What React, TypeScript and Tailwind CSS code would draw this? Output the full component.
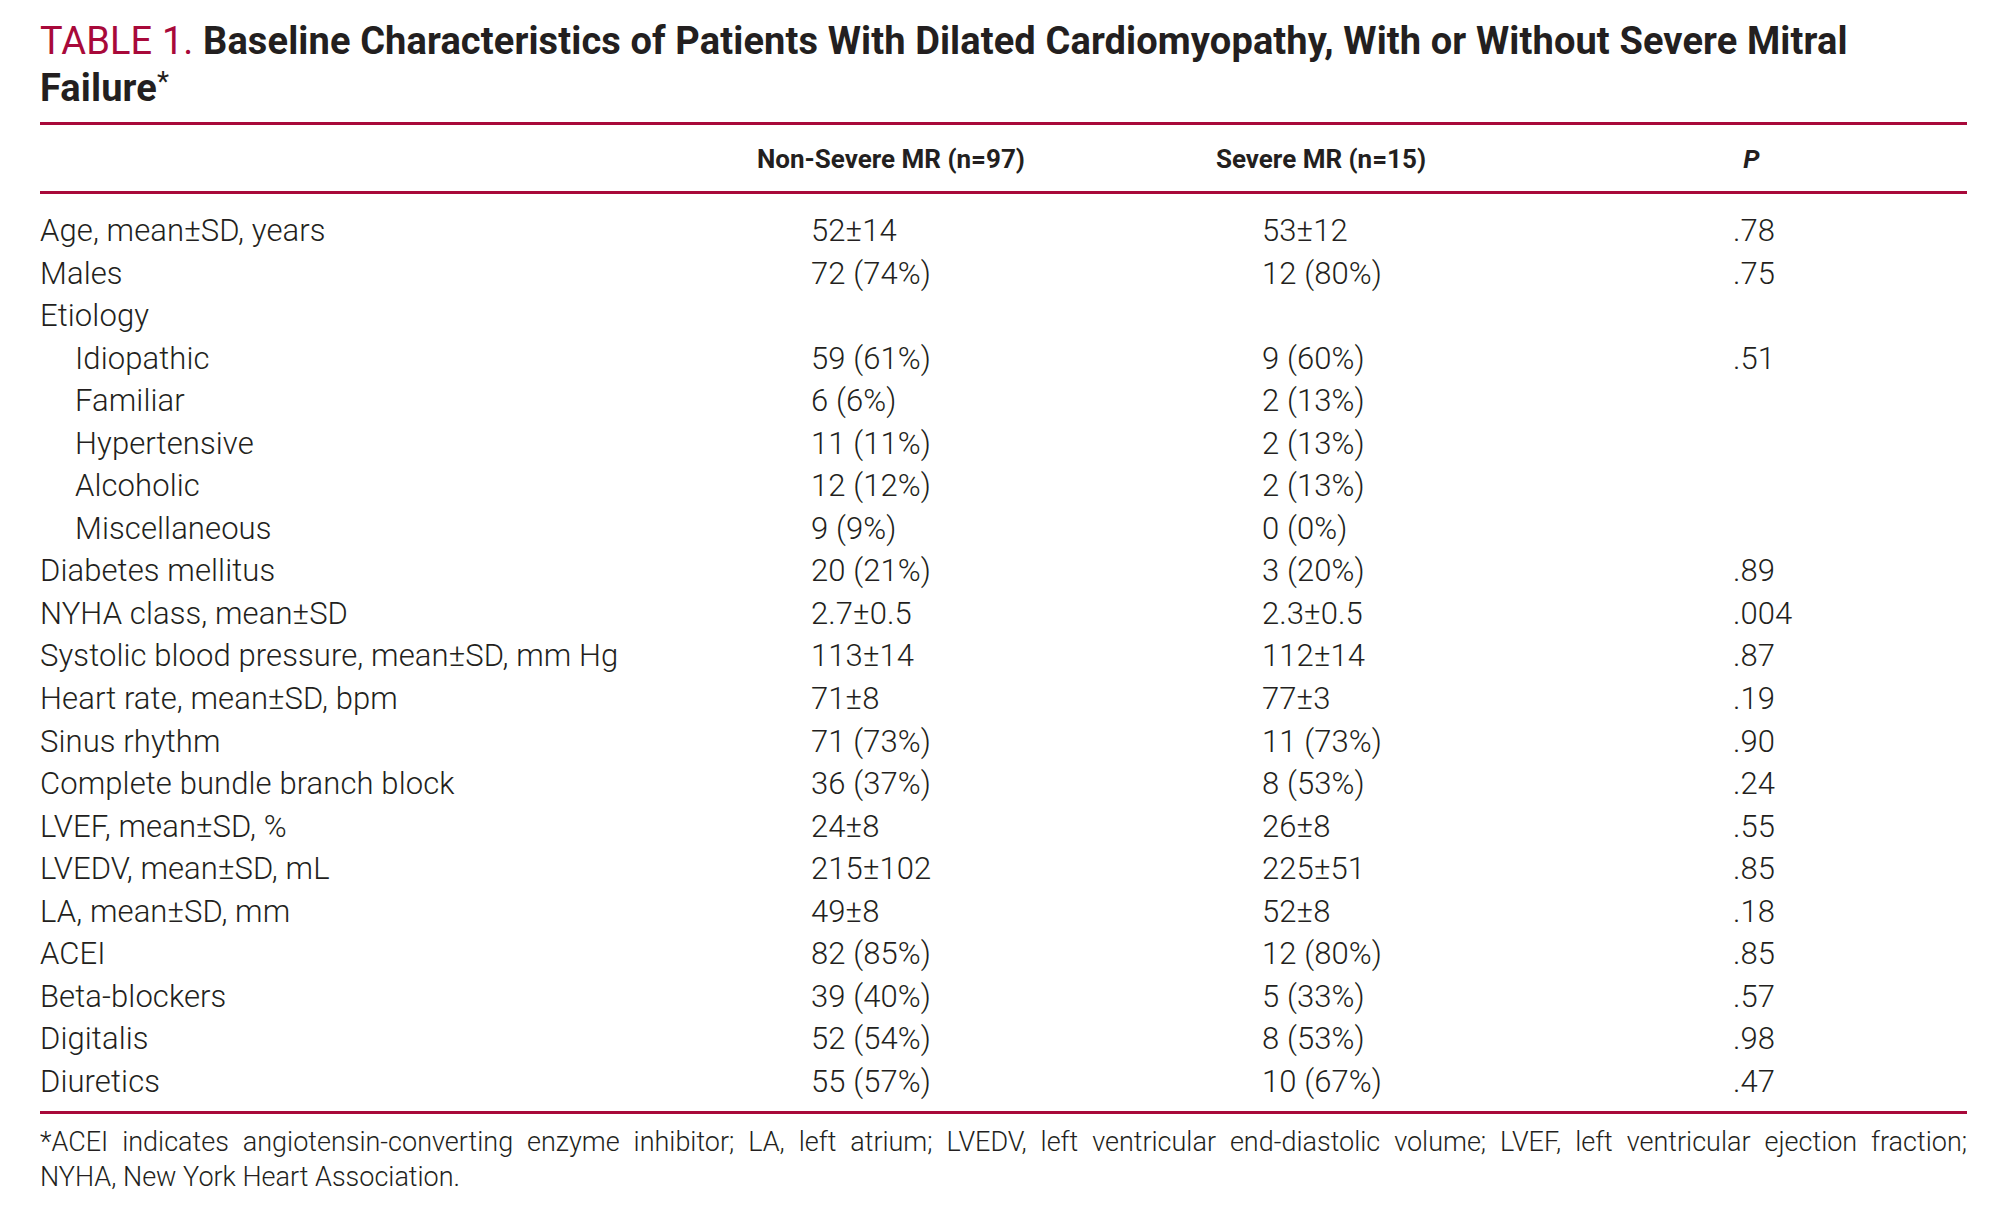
const rows: { label: string; indent?: boolean; a?: string; b?: string; p?: string }[] = [
  { label: "Age, mean±SD, years", a: "52±14", b: "53±12", p: ".78" },
  { label: "Males", a: "72 (74%)", b: "12 (80%)", p: ".75" },
  { label: "Etiology" },
  { label: "Idiopathic", indent: true, a: "59 (61%)", b: "9 (60%)", p: ".51" },
  { label: "Familiar", indent: true, a: "6 (6%)", b: "2 (13%)" },
  { label: "Hypertensive", indent: true, a: "11 (11%)", b: "2 (13%)" },
  { label: "Alcoholic", indent: true, a: "12 (12%)", b: "2 (13%)" },
  { label: "Miscellaneous", indent: true, a: "9 (9%)", b: "0 (0%)" },
  { label: "Diabetes mellitus", a: "20 (21%)", b: "3 (20%)", p: ".89" },
  { label: "NYHA class, mean±SD", a: "2.7±0.5", b: "2.3±0.5", p: ".004" },
  { label: "Systolic blood pressure, mean±SD, mm Hg", a: "113±14", b: "112±14", p: ".87" },
  { label: "Heart rate, mean±SD, bpm", a: "71±8", b: "77±3", p: ".19" },
  { label: "Sinus rhythm", a: "71 (73%)", b: "11 (73%)", p: ".90" },
  { label: "Complete bundle branch block", a: "36 (37%)", b: "8 (53%)", p: ".24" },
  { label: "LVEF, mean±SD, %", a: "24±8", b: "26±8", p: ".55" },
  { label: "LVEDV, mean±SD, mL", a: "215±102", b: "225±51", p: ".85" },
  { label: "LA, mean±SD, mm", a: "49±8", b: "52±8", p: ".18" },
  { label: "ACEI", a: "82 (85%)", b: "12 (80%)", p: ".85" },
  { label: "Beta-blockers", a: "39 (40%)", b: "5 (33%)", p: ".57" },
  { label: "Digitalis", a: "52 (54%)", b: "8 (53%)", p: ".98" },
  { label: "Diuretics", a: "55 (57%)", b: "10 (67%)", p: ".47" },
]

export default function App() {
  return (
    <div className="min-h-screen bg-white text-[#231f20] [font-family:Roboto,sans-serif]">
      <div className="w-[1927px] ml-[40px] pt-[18px]">
        {/* title */}
        <div className="text-[38px] leading-[47px] tracking-[0.12px]">
          <div>
            <span className="text-[#a8093a]">TABLE 1.</span>{" "}
            <span className="font-bold">
              Baseline Characteristics of Patients With Dilated Cardiomyopathy, With or Without Severe Mitral
            </span>
          </div>
          <div className="font-bold">
            Failure<span className="font-normal text-[28px] align-[10px] leading-none">*</span>
          </div>
        </div>

        <div className="mt-[10px] h-[3px] bg-[#a8093a]" />

        {/* header */}
        <div className="grid grid-cols-[636px_430px_430px_1fr] h-[66px] pt-[3px] items-center text-[26px] font-bold">
          <div />
          <div className="text-center">Non-Severe MR (n=97)</div>
          <div className="text-center">Severe MR (n=15)</div>
          <div className="text-center italic">P</div>
        </div>

        <div className="h-[3px] bg-[#a8093a]" />

        {/* body */}
        <div className="pt-[14px] pb-[10px] text-[31px] font-light tracking-[0.1px]">
          {rows.map((r) => (
            <div key={r.label} className="grid grid-cols-[636px_430px_430px_1fr] h-[42.56px] items-center">
              <div className={r.indent ? "pl-[35px]" : ""}>{r.label}</div>
              <div className="pl-[135px]">{r.a}</div>
              <div className="pl-[156px]">{r.b}</div>
              <div className="pl-[197px]">{r.p}</div>
            </div>
          ))}
        </div>

        <div className="h-[3px] bg-[#a8093a]" />

        {/* footnote */}
        <div className="pt-[11px] text-[27px] leading-[35px] font-light">
          <div className="text-justify [text-align-last:justify]">
            *ACEI indicates angiotensin-converting enzyme inhibitor; LA, left atrium; LVEDV, left ventricular end-diastolic volume; LVEF, left ventricular ejection fraction;
          </div>
          <div>NYHA, New York Heart Association.</div>
        </div>
      </div>
    </div>
  )
}
